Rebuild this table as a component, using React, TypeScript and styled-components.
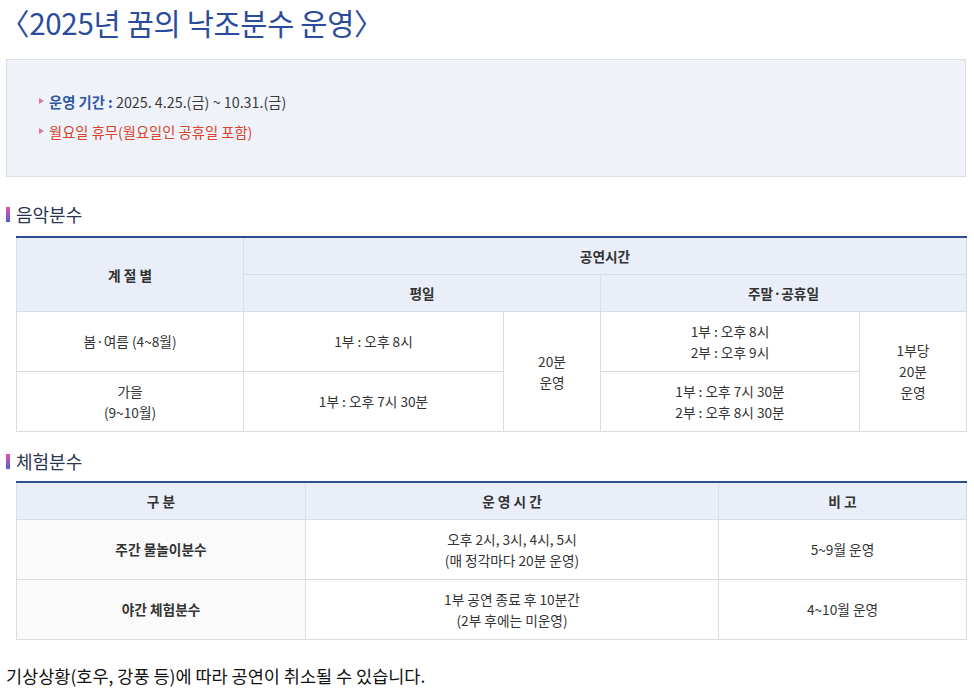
import * as React from 'react';
import styled, { createGlobalStyle } from 'styled-components';

const GlobalStyle = createGlobalStyle`
  body {
    margin: 0;
    background: #fff;
    font-family: "Noto Sans CJK KR", "Noto Sans", sans-serif;
    color: #333;
  }
`;

const Page = styled.div`
  width: 960px;
  padding: 0 8px 0 6px;
`;

const Title = styled.h1`
  margin: 0 0 15px -6px;
  font-size: 29.5px;
  line-height: 44px;
  font-weight: 400;
  color: #2b4c9e;
  letter-spacing: -0.3px;
`;

const InfoBox = styled.ul`
  margin: 0;
  list-style: none;
  padding: 27px 30px 29px 32px;
  background: #f0f2fa;
  border: 1px solid #dcdde3;
`;

const InfoItem = styled.li<{ $tone?: 'red' }>`
  position: relative;
  padding-left: 10px;
  font-size: 14.3px;
  line-height: 30px;
  color: ${p => (p.$tone === 'red' ? '#d8432a' : '#3a3a3a')};

  &::before {
    content: '';
    position: absolute;
    left: 0;
    top: 11px;
    border-left: 5px solid #e07a92;
    border-top: 3.5px solid transparent;
    border-bottom: 3.5px solid transparent;
  }
`;

const Label = styled.strong`
  color: #2d57a4;
  font-weight: 700;
`;

const Heading = styled.h2<{ $top: number; $bottom: number }>`
  display: flex;
  align-items: center;
  gap: 6px;
  margin: ${p => p.$top}px 0 ${p => p.$bottom}px;
  font-size: 18px;
  line-height: 24px;
  font-weight: 400;
  color: #2a3550;

  &::before {
    content: '';
    width: 4px;
    height: 15px;
    background: linear-gradient(#ec4fa6, #4d5fd8);
  }
`;

const Table = styled.table`
  margin-left: 10px;
  width: 950px;
  border-collapse: collapse;
  table-layout: fixed;
  border-top: 2px solid #2d4d8e;
  font-size: 13.7px;
  color: #333;
`;

const Th = styled.th`
  height: 36px;
  padding: 0;
  background: #e9eef9;
  border: 1px solid #d9dde6;
  font-weight: 700;
  text-align: center;
`;

const Td = styled.td<{ $row?: boolean }>`
  height: 59px;
  padding: 0 4px;
  border: 1px solid #dcdcdc;
  text-align: center;
  line-height: 21px;
  background: ${p => (p.$row ? '#fafafa' : '#fff')};
  font-weight: ${p => (p.$row ? 700 : 400)};
`;

const Note = styled.p`
  margin: 24px 0 0;
  font-size: 17.5px;
  line-height: 24px;
  font-weight: 400;
  color: #111;
`;

const Lines: React.FC<{ lines: string[] }> = ({ lines }) => (
  <>
    {lines.map((l, i) => (
      <React.Fragment key={i}>
        {i > 0 && <br />}
        {l}
      </React.Fragment>
    ))}
  </>
);

const App: React.FC = () => {
  return (
    <Page>
      <GlobalStyle />
      <Title>〈2025년 꿈의 낙조분수 운영〉</Title>
      <InfoBox>
        <InfoItem>
          <Label>운영 기간 :</Label> 2025. 4.25.(금) ~ 10.31.(금)
        </InfoItem>
        <InfoItem $tone="red">월요일 휴무(월요일인 공휴일 포함)</InfoItem>
      </InfoBox>

      <Heading $top={25} $bottom={10}>음악분수</Heading>
      <Table>
        <colgroup>
          <col style={{ width: 227 }} />
          <col style={{ width: 260 }} />
          <col style={{ width: 97 }} />
          <col style={{ width: 259 }} />
          <col style={{ width: 107 }} />
        </colgroup>
        <thead>
          <tr>
            <Th rowSpan={2}>계 절 별</Th>
            <Th colSpan={4}>공연시간</Th>
          </tr>
          <tr>
            <Th colSpan={2}>평일</Th>
            <Th colSpan={2}>주말·공휴일</Th>
          </tr>
        </thead>
        <tbody>
          <tr>
            <Td>봄·여름 (4~8월)</Td>
            <Td>1부 : 오후 8시</Td>
            <Td rowSpan={2}><Lines lines={['20분', '운영']} /></Td>
            <Td><Lines lines={['1부 : 오후 8시', '2부 : 오후 9시']} /></Td>
            <Td rowSpan={2}><Lines lines={['1부당', '20분', '운영']} /></Td>
          </tr>
          <tr>
            <Td><Lines lines={['가을', '(9~10월)']} /></Td>
            <Td>1부 : 오후 7시 30분</Td>
            <Td><Lines lines={['1부 : 오후 7시 30분', '2부 : 오후 8시 30분']} /></Td>
          </tr>
        </tbody>
      </Table>

      <Heading $top={17} $bottom={8}>체험분수</Heading>
      <Table>
        <colgroup>
          <col style={{ width: 289 }} />
          <col style={{ width: 413 }} />
          <col style={{ width: 248 }} />
        </colgroup>
        <thead>
          <tr>
            <Th>구 분</Th>
            <Th>운 영 시 간</Th>
            <Th>비 고</Th>
          </tr>
        </thead>
        <tbody>
          <tr>
            <Td $row>주간 물놀이분수</Td>
            <Td><Lines lines={['오후 2시, 3시, 4시, 5시', '(매 정각마다 20분 운영)']} /></Td>
            <Td>5~9월 운영</Td>
          </tr>
          <tr>
            <Td $row>야간 체험분수</Td>
            <Td><Lines lines={['1부 공연 종료 후 10분간', '(2부 후에는 미운영)']} /></Td>
            <Td>4~10월 운영</Td>
          </tr>
        </tbody>
      </Table>

      <Note>기상상황(호우, 강풍 등)에 따라 공연이 취소될 수 있습니다.</Note>
    </Page>
  );
};

export default App;
